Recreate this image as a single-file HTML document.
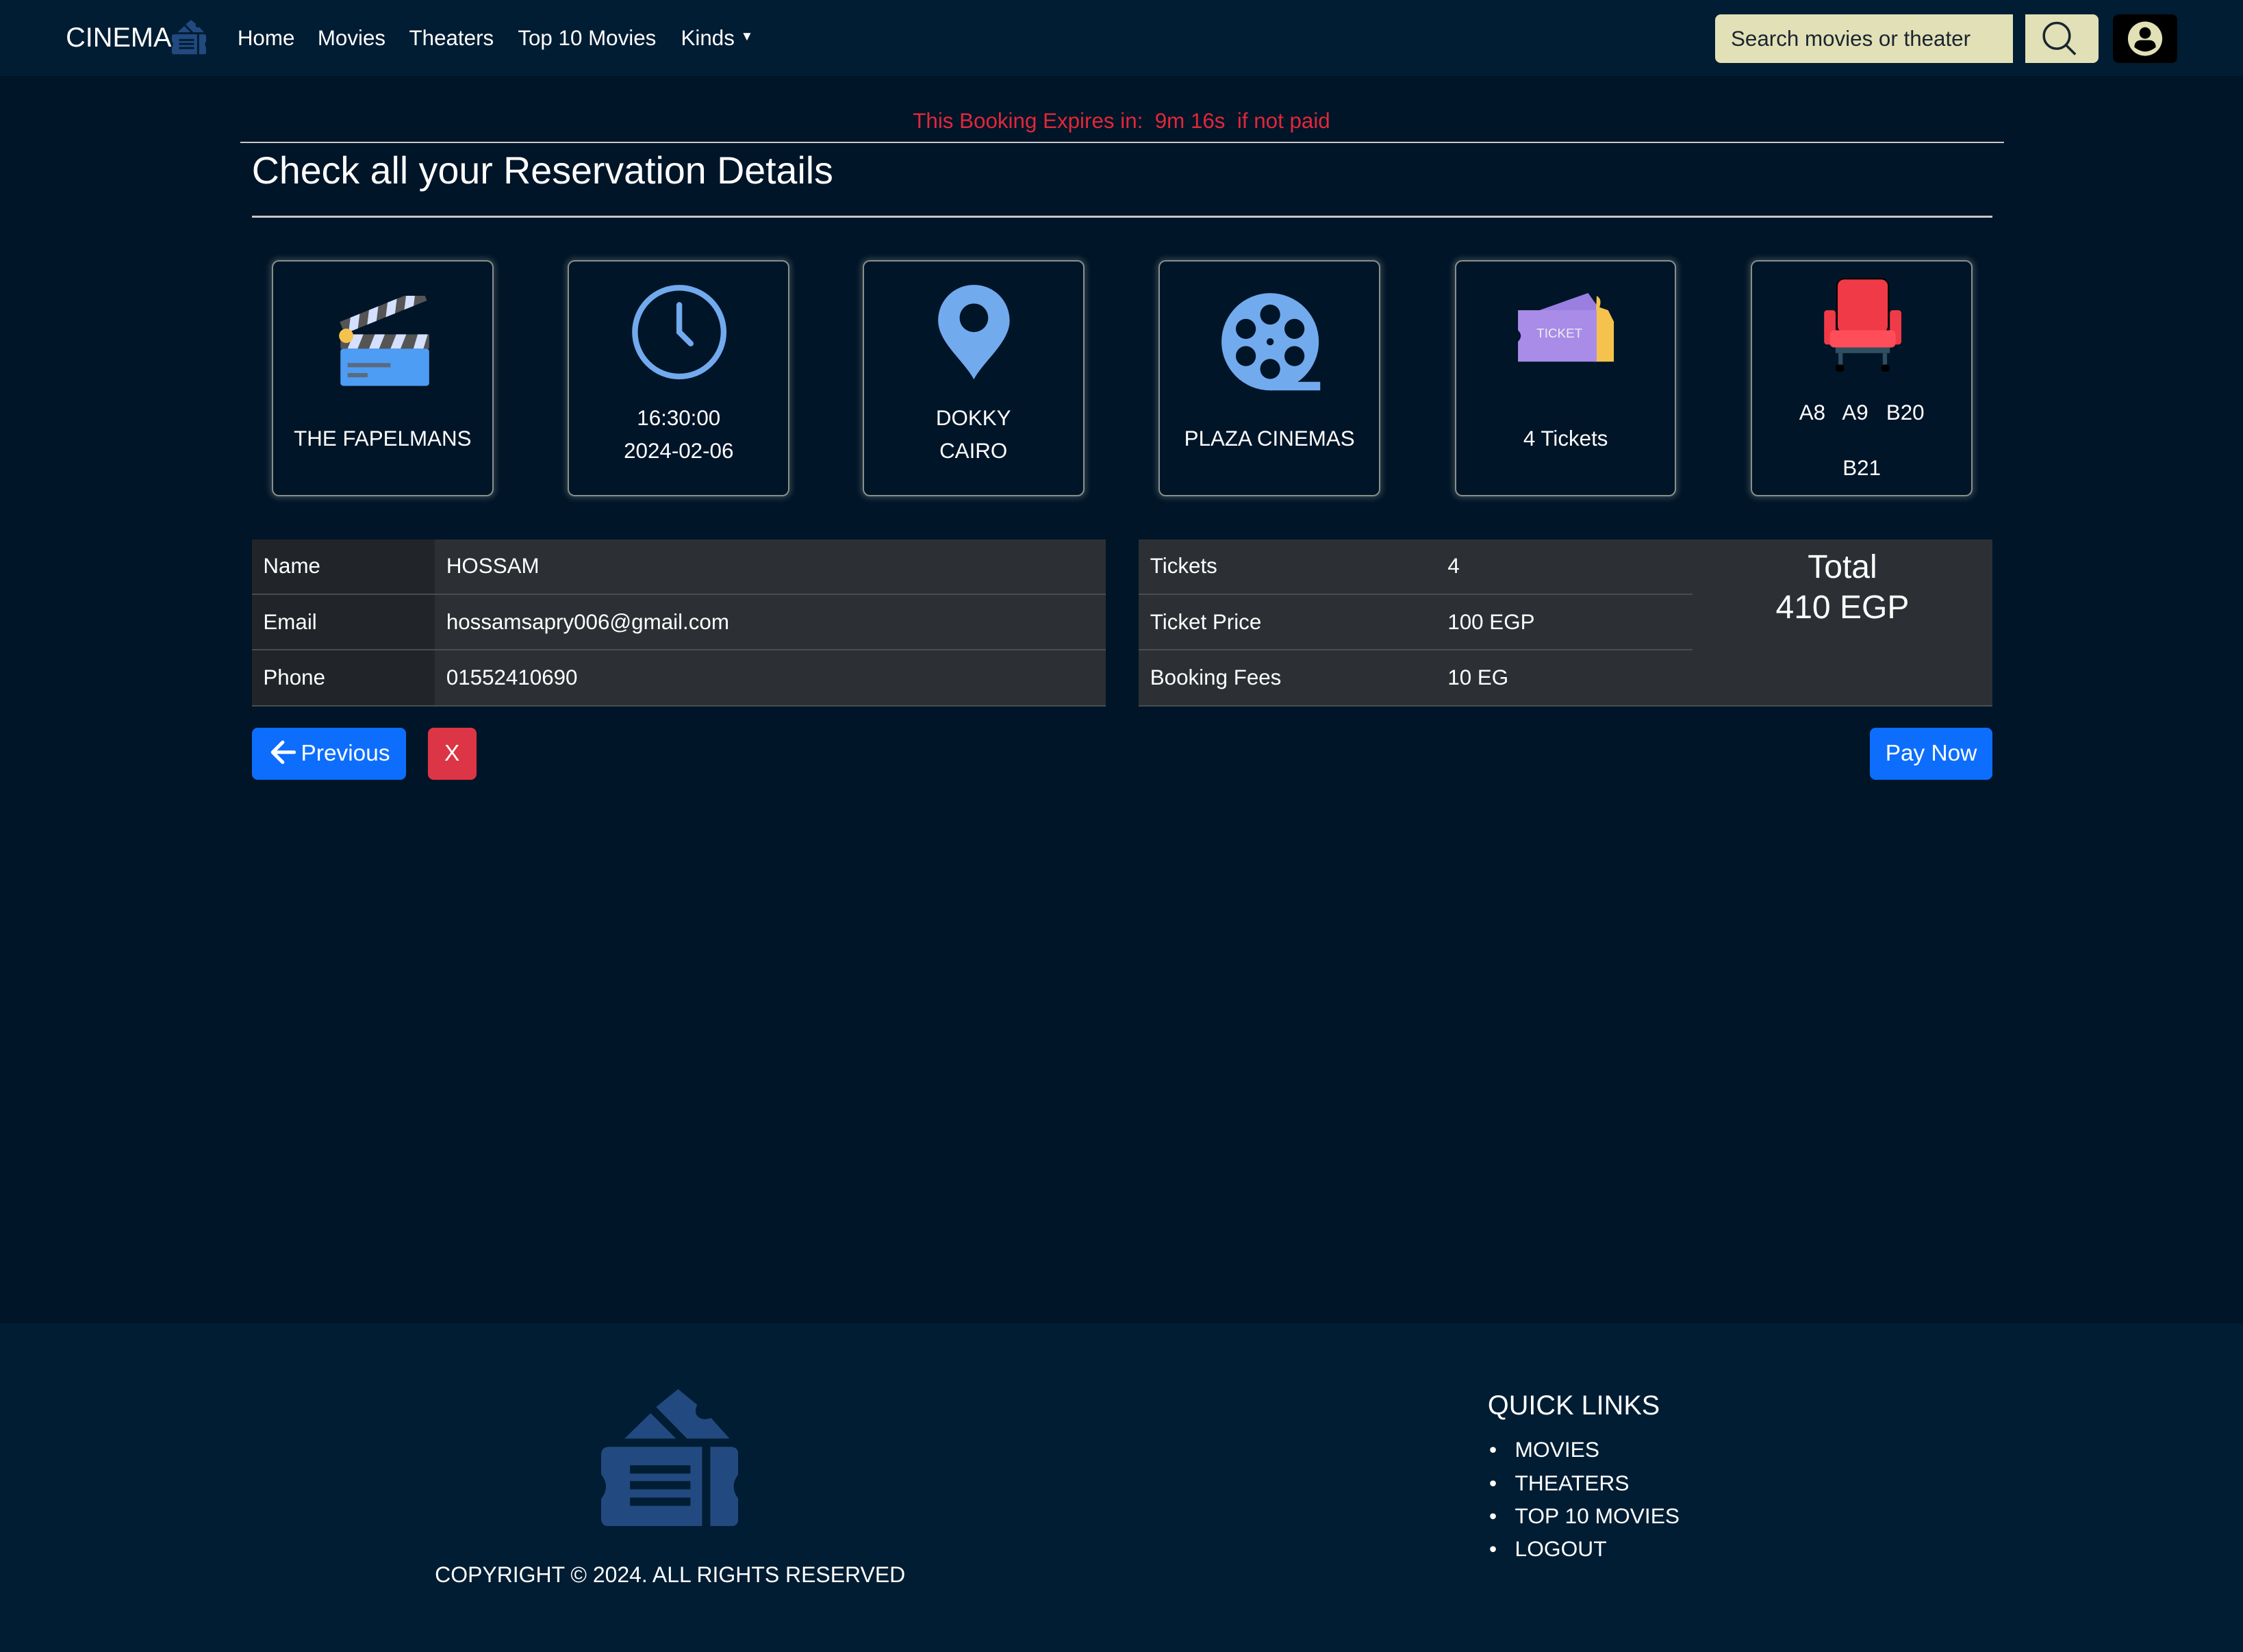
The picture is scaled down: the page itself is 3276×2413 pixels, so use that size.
<!DOCTYPE html>
<html><head><meta charset="utf-8"><style>
html,body{margin:0;padding:0}
body{width:1568px;height:1154.5px;background:#011528;font-family:"Liberation Sans",Arial,sans-serif;color:#fff;zoom:2.0893;position:relative;overflow:hidden}
.a{position:absolute}
nav{position:absolute;left:0;top:0;width:1568px;height:53px;background:#011d33}
.nl{font-size:15px;top:18px;color:#fff}
.card{position:absolute;top:182px;width:153px;height:163px;border:1px solid #8a8f8a;border-radius:5px;box-shadow:0 0 4px 1px rgba(150,160,150,.35);text-align:center;font-size:15px}
table{border-collapse:collapse;font-size:15px;position:absolute}
td{height:38px;padding:0 8px;border-bottom:1px solid #494d51;background:#2c3034}
td.f{background:#212529}
.btn{position:absolute;top:509px;height:36px;border-radius:4px;font-size:16px;line-height:36px;color:#fff;text-align:center;white-space:nowrap}
footer{position:absolute;left:0;top:925px;width:1568px;height:230px;background:#011d33}
</style></head><body>
<nav>
<div class="a" style="left:46px;top:16px;font-size:19px">CINEMA</div>
<svg class="a" style="left:120px;top:13px" width="24" height="26" viewBox="0 0 200 200"><g fill="#224a80"><polygon points="34,72 72,35 109,72"/><path d="M80,26 L112,0 L140,23 C132,38 145,48 160,42 L187,72 L125,72 Z"/><path d="M0,96 Q0,84 12,84 L147,84 L147,200 L12,200 Q0,200 0,188 L0,160 Q14,142 0,124 Z"/><path d="M159,84 L188,84 Q200,84 200,96 L200,124 Q186,142 200,160 L200,188 Q200,200 188,200 L159,200 Z"/></g><g fill="#011d33"><rect x="42" y="111" width="88" height="12"/><rect x="42" y="134" width="88" height="12"/><rect x="42" y="158" width="88" height="12"/></g></svg>
<div class="a nl" style="left:166px">Home</div>
<div class="a nl" style="left:222px">Movies</div>
<div class="a nl" style="left:286px">Theaters</div>
<div class="a nl" style="left:362px">Top 10 Movies</div>
<div class="a nl" style="left:476px">Kinds <span style="font-size:9px;position:relative;top:-3px">▼</span></div>
<div class="a" style="left:1199px;top:10px;width:208px;height:34px;background:#e2e0b6;border-radius:4px 0 0 4px;color:#1a2530;font-size:15px;line-height:34px;padding-left:11px;box-sizing:border-box">Search movies or theater</div>
<div class="a" style="left:1416px;top:10px;width:51px;height:34px;background:#e2e0b6;border-radius:0 4px 4px 0"><svg width="51" height="34"><circle cx="22" cy="15" r="9" fill="none" stroke="#1a2530" stroke-width="1.7"/><line x1="28.5" y1="21.5" x2="35" y2="28" stroke="#1a2530" stroke-width="1.7"/></svg></div>
<div class="a" style="left:1477px;top:10px;width:45px;height:34px;background:#000;border-radius:4px"><svg width="45" height="34"><circle cx="22.5" cy="17" r="12" fill="#e2e0b6"/><circle cx="22.5" cy="13" r="4" fill="#000"/><path d="M15,23 Q15,18 20,18 L25,18 Q30,18 30,23 Q22.5,29 15,23Z" fill="#000"/></svg></div>
</nav>
<div class="a" style="left:0;width:1568px;top:76px;text-align:center;color:#e0283a;font-size:15px">This Booking Expires in:&nbsp; 9m 16s&nbsp; if not paid</div>
<div class="a" style="left:168px;top:99px;width:1233px;height:1px;background:#c8c8c8"></div>
<div class="a" style="left:176px;top:104px;font-size:26.6px">Check all your Reservation Details</div>
<div class="a" style="left:176px;top:151px;width:1217px;height:1px;background:#c8c8c8"></div>

<div class="card" style="left:190px">
<svg class="a" style="left:44px;top:24px" width="66" height="66" viewBox="0 0 66 66"><g transform="rotate(-22 10 26)"><rect x="6" y="16" width="62" height="9" fill="#555"/><path d="M14 16h7l-5 9h-7zM28 16h7l-5 9h-7zM42 16h7l-5 9h-7zM56 16h7l-5 9h-7z" fill="#d5e0ff"/></g><rect x="3" y="27" width="62" height="10" fill="#555"/><path d="M12 27h7l-4 10h-7zM27 27h7l-4 10h-7zM42 27h7l-4 10h-7zM57 27h7l-3 10h-7z" fill="#d5e0ff"/><rect x="3" y="37" width="62" height="26" rx="2" fill="#4d9df5"/><rect x="8" y="47" width="30" height="3" fill="#5a6b80"/><rect x="8" y="54" width="14" height="3" fill="#5a6b80"/><circle cx="7" cy="28" r="5" fill="#f5c34d"/></svg>
<div class="a" style="left:0;width:153px;top:115px">THE FAPELMANS</div></div>

<div class="card" style="left:397px">
<svg class="a" style="left:42px;top:14px" width="70" height="70"><circle cx="35" cy="35" r="31" fill="none" stroke="#72aaee" stroke-width="4"/><path d="M35 16v19l8 8" fill="none" stroke="#72aaee" stroke-width="4" stroke-linecap="round"/></svg>
<div class="a" style="left:0;width:153px;top:98px;line-height:23px">16:30:00<br>2024-02-06</div></div>

<div class="card" style="left:603px">
<svg class="a" style="left:50px;top:14px" width="54" height="70" viewBox="0 0 54 70"><path d="M27 2C13 2 2 13 2 27C2 42 20 55 27 68C34 55 52 42 52 27C52 13 41 2 27 2Z" fill="#72aaee"/><circle cx="27" cy="25" r="10" fill="#011528"/></svg>
<div class="a" style="left:0;width:153px;top:98px;line-height:23px">DOKKY<br>CAIRO</div></div>

<div class="card" style="left:810px">
<svg class="a" style="left:42px;top:20px" width="72" height="72"><circle cx="35" cy="36" r="34" fill="#72aaee"/><rect x="35" y="64" width="35" height="6" fill="#72aaee"/><g fill="#011528"><circle cx="35" cy="17" r="7"/><circle cx="35" cy="55" r="7"/><circle cx="18" cy="27" r="7"/><circle cx="52" cy="27" r="7"/><circle cx="18" cy="46" r="7"/><circle cx="52" cy="46" r="7"/><circle cx="35" cy="36" r="2.5"/></g></svg>
<div class="a" style="left:0;width:153px;top:115px">PLAZA CINEMAS</div></div>

<div class="card" style="left:1017px">
<svg class="a" style="left:42px;top:22px" width="72" height="52"><polygon points="16,12 50,0 60,14 20,14" fill="#9b7fe0"/><path d="M56 2 Q60 4 58 10 L64 12 L68 20 L68 48 L54 48 Z" fill="#f5c34d"/><path d="M1 12 H56 V48 H1 V34 Q5 30 1 26 Z" fill="#a88ce8"/><text x="14" y="31" font-family="Liberation Sans" font-size="9" fill="#eee">TICKET</text></svg>
<div class="a" style="left:0;width:153px;top:115px">4 Tickets</div></div>

<div class="card" style="left:1224px">
<svg class="a" style="left:48px;top:10px" width="58" height="68" viewBox="0 0 58 68"><rect x="2" y="24" width="8" height="24" rx="2" fill="#f03a47"/><rect x="48" y="24" width="8" height="24" rx="2" fill="#f03a47"/><rect x="11" y="2" width="36" height="38" rx="5" fill="#f03a47" stroke="#000" stroke-width="1"/><rect x="6" y="38" width="46" height="12" rx="3" fill="#ff4d5a"/><rect x="10" y="50" width="38" height="4" fill="#2f4f5f"/><rect x="12" y="54" width="3" height="10" fill="#2f4f5f"/><rect x="43" y="54" width="3" height="10" fill="#2f4f5f"/><rect x="10" y="62" width="6" height="5" rx="2" fill="#000"/><rect x="42" y="62" width="6" height="5" rx="2" fill="#000"/></svg>
<div class="a" style="left:0;width:153px;top:97px">A8 &nbsp; A9 &nbsp; B20</div>
<div class="a" style="left:0;width:153px;top:136px">B21</div></div>

<table style="left:176px;top:377px;width:597px"><tr><td class="f" style="width:112px">Name</td><td>HOSSAM</td></tr><tr><td class="f">Email</td><td>hossamsapry006@gmail.com</td></tr><tr><td class="f">Phone</td><td>01552410690</td></tr></table>
<table style="left:796px;top:377px;width:597px"><tr><td style="width:192px">Tickets</td><td style="width:163px">4</td><td rowspan="3" style="vertical-align:top;text-align:center;font-size:23px;line-height:28px;padding-top:6px">Total<br>410 EGP</td></tr><tr><td>Ticket Price</td><td>100 EGP</td></tr><tr><td>Booking Fees</td><td>10 EG</td></tr></table>

<div class="btn" style="left:176px;width:108px;background:#0d6efd"><svg width="20" height="18" style="vertical-align:-3px;margin-right:3px"><path d="M18 9H3M10 2L3 9l7 7" fill="none" stroke="#fff" stroke-width="2.4" stroke-linecap="round" stroke-linejoin="round"/></svg>Previous</div>
<div class="btn" style="left:299px;width:34px;background:#dc3545">X</div>
<div class="btn" style="left:1307px;width:86px;background:#0d6efd">Pay Now</div>

<footer>
<svg class="a" style="left:420px;top:46px" width="96" height="96" viewBox="0 0 200 200"><g fill="#224a80"><polygon points="34,72 72,35 109,72"/><path d="M80,26 L112,0 L140,23 C132,38 145,48 160,42 L187,72 L125,72 Z"/><path d="M0,96 Q0,84 12,84 L147,84 L147,200 L12,200 Q0,200 0,188 L0,160 Q14,142 0,124 Z"/><path d="M159,84 L188,84 Q200,84 200,96 L200,124 Q186,142 200,160 L200,188 Q200,200 188,200 L159,200 Z"/></g><g fill="#011d33"><rect x="42" y="111" width="88" height="12"/><rect x="42" y="134" width="88" height="12"/><rect x="42" y="158" width="88" height="12"/></g></svg>
<div class="a" style="left:304px;top:167px;font-size:15.3px">COPYRIGHT © 2024. ALL RIGHTS RESERVED</div>
<div class="a" style="left:1040px;top:47px;font-size:19px">QUICK LINKS</div>
<div class="a" style="left:1041px;top:77px;font-size:15.2px;line-height:23px">
<div>•&nbsp;&nbsp;&nbsp;MOVIES</div><div>•&nbsp;&nbsp;&nbsp;THEATERS</div><div>•&nbsp;&nbsp;&nbsp;TOP 10 MOVIES</div><div>•&nbsp;&nbsp;&nbsp;LOGOUT</div></div>
</footer>
</body></html>
